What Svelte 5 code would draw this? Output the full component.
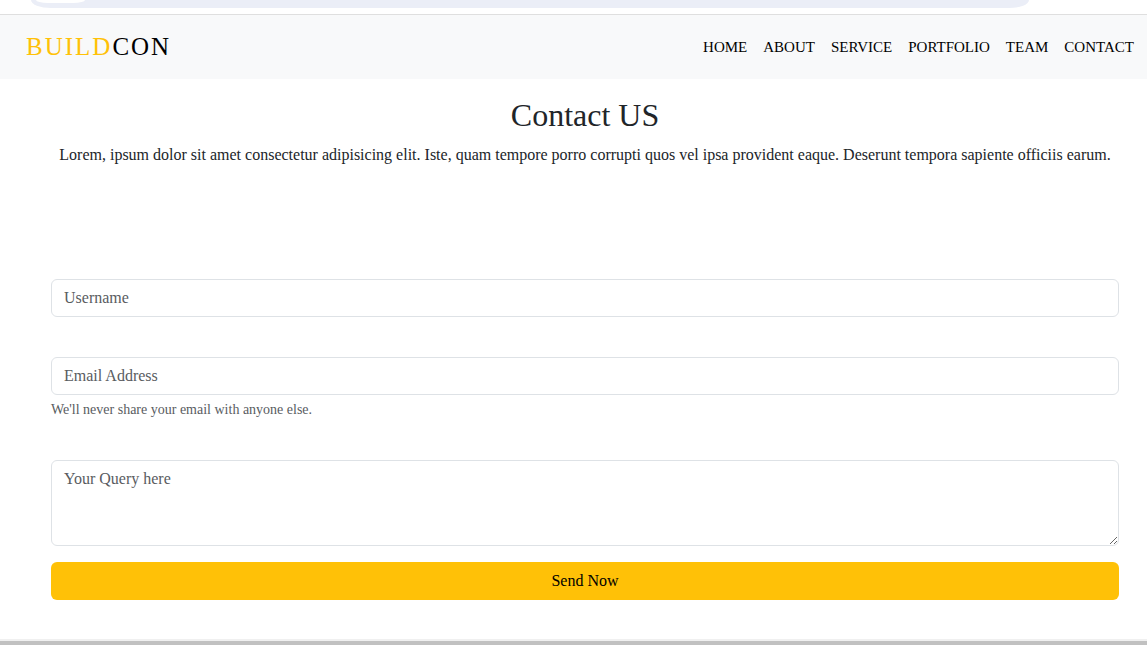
<script>
  const links = ['Home', 'About', 'Service', 'Portfolio', 'Team', 'Contact'];
  let username = $state('');
  let email = $state('');
  let query = $state('');
</script>

<div class="page">
  <div class="toolbar"><div class="address"><div class="chip"></div></div></div>

  <header class="navbar">
    <a class="brand" href="#home"><span>BUILD</span>CON</a>
    <nav>
      {#each links as link}
        <a href={'#' + link.toLowerCase()}>{link.toUpperCase()}</a>
      {/each}
    </nav>
  </header>

  <main>
    <section class="intro">
      <h2>Contact US</h2>
      <p>Lorem, ipsum dolor sit amet consectetur adipisicing elit. Iste, quam tempore porro corrupti quos vel ipsa provident eaque. Deserunt tempora sapiente officiis earum.</p>
    </section>

    <form onsubmit={(e) => e.preventDefault()}>
      <div class="field">
        <input type="text" aria-label="Username" placeholder="Username" bind:value={username} />
      </div>
      <div class="field">
        <input type="email" aria-label="Email Address" aria-describedby="email-help" placeholder="Email Address" bind:value={email} />
        <div class="help" id="email-help">We'll never share your email with anyone else.</div>
      </div>
      <textarea rows="3" aria-label="Your Query here" placeholder="Your Query here" bind:value={query}></textarea>
      <button type="submit">Send Now</button>
    </form>
  </main>

  <div class="scrollbar"></div>
</div>

<style>
  :global(body) {
    background: #fff;
  }
  .page {
    display: flex;
    flex-direction: column;
    min-height: 100vh;
    box-sizing: border-box;
    font-family: "Liberation Serif", "Times New Roman", serif;
    font-size: 16px;
    line-height: 24px;
    color: #212529;
  }
  .toolbar {
    flex: none;
    height: 14px;
    padding: 0 118px 0 31px;
    border-bottom: 1px solid #dfdfdf;
  }
  .address {
    height: 8px;
    padding-left: 5px;
    border-radius: 0 0 20px 20px / 0 0 8px 8px;
    background: #ebeef7;
  }
  .chip {
    width: 49px;
    height: 3px;
    border-radius: 0 0 12px 12px / 0 0 3px 3px;
    background: #fff;
  }
  .navbar {
    display: flex;
    flex: none;
    align-items: center;
    justify-content: space-between;
    height: 64px;
    padding: 0 13px 0 26px;
    background: #f8f9fa;
  }
  .navbar a {
    color: #000;
    text-decoration: none;
  }
  .brand {
    font-size: 25px;
    letter-spacing: 2px;
  }
  .navbar .brand span {
    color: #ffc107;
  }
  nav {
    display: flex;
    gap: 16px;
    font-size: 15px;
  }
  main {
    flex: 1;
    padding: 18px 28px 0 51px;
  }
  .intro {
    text-align: center;
  }
  h2 {
    margin: 0 0 10px;
    font-size: 32px;
    line-height: 36px;
    font-weight: 400;
  }
  p {
    margin: 0 0 112px;
  }
  form {
    display: flex;
    flex-direction: column;
  }
  .field {
    margin-bottom: 40px;
  }
  input,
  textarea {
    display: block;
    box-sizing: border-box;
    width: 100%;
    margin: 0;
    padding: 6px 12px;
    border: 1px solid #dee2e6;
    border-radius: 6px;
    background: #fff;
    color: #212529;
    font: inherit;
  }
  input {
    height: 38px;
  }
  textarea {
    height: 86px;
    resize: vertical;
  }
  ::placeholder {
    color: #595c5f;
    opacity: 1;
  }
  .help {
    margin-top: 4px;
    font-size: 14px;
    line-height: 21px;
    color: #595c5f;
  }
  button {
    height: 38px;
    margin: 16px 0 0;
    border: 0;
    border-radius: 6px;
    background: #ffc107;
    color: #000;
    font: inherit;
    cursor: pointer;
  }
  .scrollbar {
    flex: none;
    height: 4px;
    border-top: 2px solid #f0f0f0;
    background: #c1c1c1;
  }
</style>
